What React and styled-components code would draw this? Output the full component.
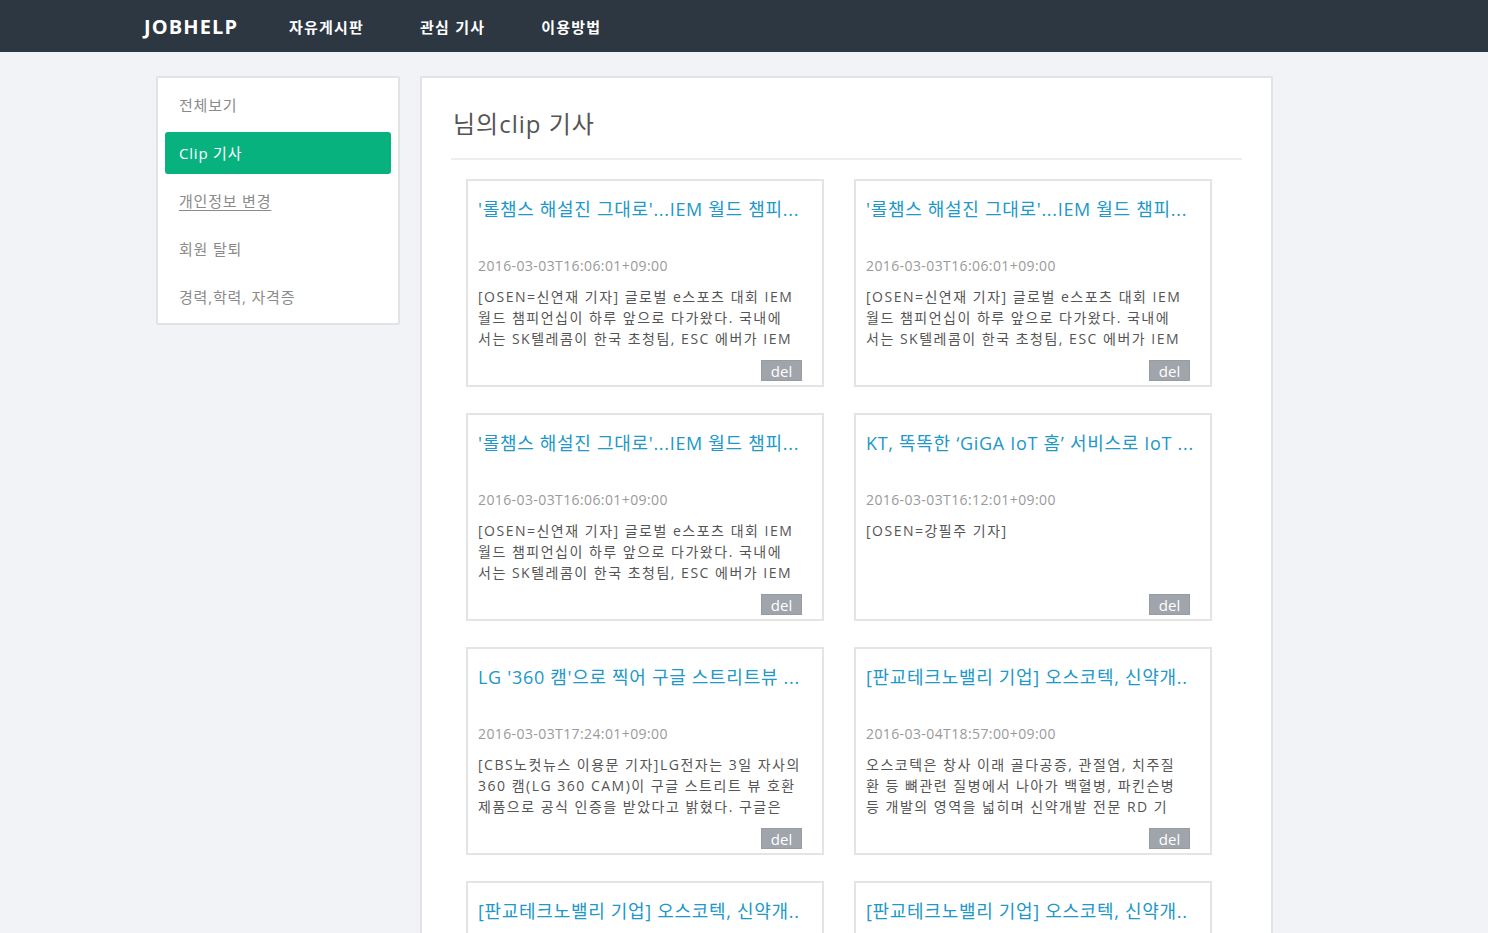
import React from "react";
import styled, { createGlobalStyle } from "styled-components";

const Global = createGlobalStyle`
  html, body { margin: 0; padding: 0; }
  body {
    background: #f2f3f7;
    font-family: "Open Sans", "Noto Sans CJK KR", sans-serif;
    color: #555;
  }
  * { box-sizing: border-box; }
`;

const NavBar = styled.header`
  height: 52px;
  background: #2c3742;
`;

const NavInner = styled.div`
  width: 1200px;
  margin: 0 auto;
  height: 100%;
  display: flex;
  align-items: center;
`;

const Logo = styled.div`
  font-family: "Open Sans", sans-serif;
  font-weight: 700;
  font-size: 20px;
  color: #fff;
  letter-spacing: 1.1px;
  margin-right: 51px;
`;

const NavLink = styled.a`
  font-size: 15px;
  font-weight: 700;
  color: #fff;
  letter-spacing: 1.2px;
  margin-right: 56px;
  text-decoration: none;
`;

const Container = styled.div`
  width: 1176px;
  margin: 0 auto;
  padding-top: 24px;
  display: flex;
  align-items: flex-start;
  gap: 20px;
`;

const Sidebar = styled.nav`
  width: 244px;
  flex: none;
  background: #fff;
  border: 2px solid #e2e3e6;
  border-radius: 2px;
  padding: 6px 7px 5px;
  display: flex;
  flex-direction: column;
  gap: 6px;
`;

const SideItem = styled.a`
  height: 42px;
  display: flex;
  align-items: center;
  padding-left: 14px;
  padding-bottom: 2px;
  border-radius: 3px;
  font-size: 15px;
  letter-spacing: 0.8px;
  color: ${(p) => (p.$active ? "#fff" : "#8a8a8a")};
  background: ${(p) => (p.$active ? "#08b27f" : "transparent")};
  text-decoration: ${(p) => (p.$underline ? "underline" : "none")};
  text-underline-offset: 3px;
`;

const Main = styled.main`
  width: 853px;
  flex: none;
  background: #fff;
  border: 2px solid #e2e3e6;
  border-bottom: none;
  border-radius: 2px 2px 0 0;
  padding: 28px 29px 40px;
  min-height: 900px;
`;

const Title = styled.h2`
  margin: 0 0 0 2px;
  font-size: 24px;
  font-weight: 400;
  line-height: 36px;
  letter-spacing: 1px;
  color: #555;
`;

const Rule = styled.hr`
  margin: 16px 0 19px;
  border: none;
  border-top: 2px solid #eeeeee;
`;

const Grid = styled.div`
  margin-left: 15px;
  display: grid;
  grid-template-columns: 358px 358px;
  column-gap: 30px;
  row-gap: 26px;
`;

const Card = styled.article`
  height: 208px;
  border: 2px solid #e4e4e4;
  padding: 0 20px 0 10px;
  display: flex;
  flex-direction: column;
  overflow: hidden;
`;

const CardTitle = styled.a`
  display: block;
  margin-top: 16px;
  height: 47px;
  font-size: 18px;
  line-height: 24px;
  color: #2198c8;
  text-decoration: none;
  white-space: nowrap;
  letter-spacing: 0.7px;
`;

const DateText = styled.div`
  margin-top: 12px;
  font-size: 14px;
  line-height: 20px;
  letter-spacing: 0.4px;
  color: #9a9a9a;
`;

const Desc = styled.p`
  margin: 10px 0 0;
  font-size: 14px;
  line-height: 21px;
  height: 63px;
  overflow: hidden;
  color: #555;
  letter-spacing: 1.5px;
  white-space: pre;
`;

const DelRow = styled.div`
  margin-top: 11px;
  display: flex;
  justify-content: flex-end;
`;

const DelButton = styled.button`
  width: 41px;
  height: 21px;
  padding: 0;
  border: 1px solid #979ba2;
  background: #a0a4ab;
  color: #fff;
  font-family: "Open Sans", sans-serif;
  font-size: 15px;
  line-height: 18px;
`;

const LOL = {
  title: "'롤챔스 해설진 그대로'...IEM 월드 챔피...",
  date: "2016-03-03T16:06:01+09:00",
  desc: [
    "[OSEN=신연재 기자] 글로벌 e스포츠 대회 IEM",
    "월드 챔피언십이 하루 앞으로 다가왔다. 국내에",
    "서는 SK텔레콤이 한국 초청팀, ESC 에버가 IEM",
  ],
};

const OSCO = {
  title: "[판교테크노밸리 기업] 오스코텍, 신약개..",
  date: "2016-03-04T18:57:00+09:00",
  desc: [
    "오스코텍은 창사 이래 골다공증, 관절염, 치주질",
    "환 등 뼈관련 질병에서 나아가 백혈병, 파킨슨병",
    "등 개발의 영역을 넓히며 신약개발 전문 RD 기",
  ],
};

const articles = [
  LOL,
  LOL,
  LOL,
  {
    title: "KT, 똑똑한 ‘GiGA IoT 홈’ 서비스로 IoT ...",
    date: "2016-03-03T16:12:01+09:00",
    desc: ["[OSEN=강필주 기자]"],
  },
  {
    title: "LG '360 캠'으로 찍어 구글 스트리트뷰 ...",
    date: "2016-03-03T17:24:01+09:00",
    desc: [
      "[CBS노컷뉴스 이용문 기자]LG전자는 3일 자사의",
      "360 캠(LG 360 CAM)이 구글 스트리트 뷰 호환",
      "제품으로 공식 인증을 받았다고 밝혔다. 구글은",
    ],
  },
  OSCO,
  OSCO,
  OSCO,
];

export default function App() {
  return (
    <>
      <Global />
      <NavBar>
        <NavInner>
          <Logo>JOBHELP</Logo>
          <NavLink>자유게시판</NavLink>
          <NavLink>관심 기사</NavLink>
          <NavLink>이용방법</NavLink>
        </NavInner>
      </NavBar>
      <Container>
        <Sidebar>
          <SideItem>전체보기</SideItem>
          <SideItem $active>Clip 기사</SideItem>
          <SideItem $underline>개인정보 변경</SideItem>
          <SideItem>회원 탈퇴</SideItem>
          <SideItem>경력,학력, 자격증</SideItem>
        </Sidebar>
        <Main>
          <Title>님의clip 기사</Title>
          <Rule />
          <Grid>
            {articles.map((a, i) => (
              <Card key={i}>
                <CardTitle>{a.title}</CardTitle>
                <DateText>{a.date}</DateText>
                <Desc>{a.desc.join("\n")}</Desc>
                <DelRow>
                  <DelButton>del</DelButton>
                </DelRow>
              </Card>
            ))}
          </Grid>
        </Main>
      </Container>
    </>
  );
}
